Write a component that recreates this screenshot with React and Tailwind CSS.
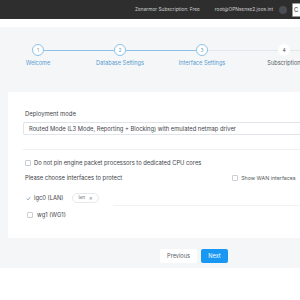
import React from 'react'

const steps = [
  { n: 1, label: 'Welcome', left: 'none', right: 'blue', active: true },
  { n: 2, label: 'Database Settings', left: 'blue', right: 'blue', active: true },
  { n: 3, label: 'Interface Settings', left: 'blue', right: 'gray', active: true },
  { n: 4, label: 'Subscription', left: 'gray', right: 'gray', active: false }
]

const lineClass = {
  none: 'bg-transparent',
  blue: 'bg-[#8cc2e8]',
  gray: 'bg-[#e3e6ea]'
}

const Checkbox = () => (
  <span className="w-[6px] h-[6px] border border-[#c9ced4] rounded-[1px] bg-white shrink-0" />
)

const App = () => {
  return (
    <div className="w-[300px] h-[300px] overflow-hidden bg-white font-['Inter',sans-serif] text-[#3d4248]">
      {/* Top bar */}
      <div className="h-[19px] bg-[#2e2e2e] flex items-center justify-end text-[4.8px] text-[#cfcfcf] whitespace-nowrap">
        <span className="mr-[15px]">Zenarmor Subscription: Free</span>
        <span className="mr-[6px]">root@OPNsense2.joos.int</span>
        <span className="w-[8px] h-[8px] rounded-full bg-[#4a4d52] mr-[5px]" />
        <span className="w-[10px] h-[14px] bg-white border border-[#999] rounded-[1px] text-[#333] text-[6px] flex items-center pl-[1px] mr-[-2px]">C</span>
      </div>
      <div className="h-[8px] bg-white" />

      {/* Gray area */}
      <div className="h-[241px] bg-[#f4f6f8] overflow-hidden">
        {/* Stepper */}
        <div className="flex w-[328px] ml-[-3px] pt-[17px]">
          {steps.map((s) => (
            <div key={s.n} className="w-[82px] flex flex-col items-center">
              <div className="w-full flex items-center h-[12px]">
                <div className={`flex-1 h-[1px] ${lineClass[s.left]}`} />
                <div
                  className={`w-[12px] h-[12px] rounded-full bg-white flex items-center justify-center text-[5px] leading-none ${
                    s.active ? 'border border-[#8cc2e8] text-[#7a9fbd]' : 'text-[#444]'
                  }`}
                >
                  {s.n}
                </div>
                <div className={`flex-1 h-[1px] ${lineClass[s.right]}`} />
              </div>
              <div
                className={`mt-[4px] h-[6px] leading-[6px] text-[5.6px] whitespace-nowrap ${
                  s.active ? 'text-[#5b9ccf]' : 'text-[#555b61]'
                }`}
              >
                {s.label}
              </div>
            </div>
          ))}
        </div>

        {/* Card */}
        <div className="mt-[26px] ml-[8px] w-[300px] h-[146px] bg-white pt-[19px] pl-[15px] text-[5.8px] leading-[6px]">
          <div className="h-[6px] ml-[2px] text-[5.9px] text-[#3f454b]">Deployment mode</div>
          <div className="mt-[5px] h-[13px] border border-[#e1e4e8] rounded-[2px] flex items-center pl-[5px] text-[#3f454b] whitespace-nowrap">
            Routed Mode (L3 Mode, Reporting + Blocking) with emulated netmap driver
          </div>
          <div className="mt-[14px] h-[1px] bg-[#eef0f2]" />

          <div className="mt-[10px] h-[6px] flex items-center gap-[3px] ml-[2px] whitespace-nowrap">
            <Checkbox />
            <span>Do not pin engine packet processors to dedicated CPU cores</span>
          </div>

          <div className="mt-[9px] h-[6px] flex items-center ml-[2px] whitespace-nowrap">
            <span>Please choose interfaces to protect</span>
            <span className="ml-[110px] flex items-center gap-[3px] text-[5.3px] text-[#555b61]">
              <Checkbox />
              Show WAN interfaces
            </span>
          </div>

          <div className="mt-[12px] h-[10px] flex items-center ml-[2px] whitespace-nowrap">
            <svg width="5" height="5" viewBox="0 0 10 10" className="ml-[1px]">
              <path d="M1.5 5.5 L4 8 L8.5 2" fill="none" stroke="#7e95ad" strokeWidth="1.5" />
            </svg>
            <span className="ml-[3px]">igc0 (LAN)</span>
            <span className="ml-[9px] h-[10px] px-[5px] rounded-full border border-[#e6e8eb] flex items-center gap-[4px] text-[4.6px] text-[#6b7178]">
              lan <span className="text-[6px] leading-none text-[#7a8087]">×</span>
            </span>
          </div>
          <div className="mt-[2px] h-[1px] bg-[#f0f2f4] ml-[90px]" />

          <div className="mt-[5px] h-[8px] flex items-center gap-[4px] ml-[4px] whitespace-nowrap">
            <Checkbox />
            <span>wg1 (WG1)</span>
          </div>
        </div>

        {/* Buttons */}
        <div className="mt-[11px] flex gap-[4px] ml-[160px]">
          <button className="w-[37px] h-[14px] bg-white rounded-[2px] text-[5.6px] text-[#555b61]">Previous</button>
          <button className="w-[27px] h-[14px] bg-[#1898f2] rounded-[2px] text-[5.6px] text-white">Next</button>
        </div>
      </div>
    </div>
  )
}

export default App
